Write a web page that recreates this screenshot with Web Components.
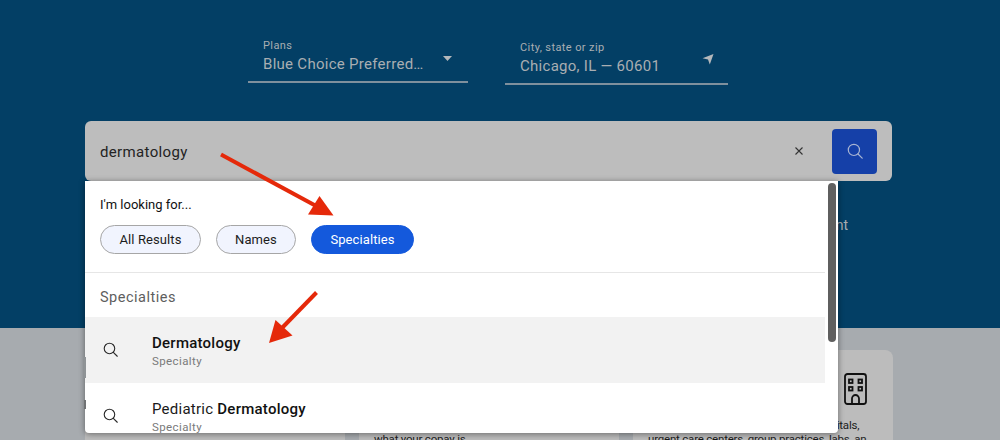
<!DOCTYPE html>
<html lang="en">
<head>
<meta charset="utf-8">
<title>Find care</title>
<style>
    html, body {
        margin: 0;
        height: 440px;
        overflow: hidden;
        background: #a7abaf;
        font-family: Roboto, "Liberation Sans", sans-serif;
    }
</style>
</head>
<body>
<care-page>
    <plan-field slot="fields" label="Plans" value="Blue Choice Preferred…" icon="caret" width="220"></plan-field>
    <plan-field slot="fields" label="City, state or zip" value="Chicago, IL — 60601" icon="nav" width="223" drop="2"></plan-field>

    <search-bar slot="search" value="dermatology">
        <suggest-panel>
            <span slot="prompt">I'm looking for...</span>
            <filter-chip slot="chips">All Results</filter-chip>
            <filter-chip slot="chips">Names</filter-chip>
            <filter-chip slot="chips" active>Specialties</filter-chip>
            <span slot="heading">Specialties</span>
            <suggest-row active><b>Dermatology</b></suggest-row>
            <suggest-row>Pediatric <b>Dermatology</b></suggest-row>
        </suggest-panel>
    </search-bar>

    <span slot="note">Search for a doctor, specialty or treatment</span>

    <info-card slot="cards"></info-card>
    <info-card slot="cards">Look up a treatment or service to see<br>what your copay is.</info-card>
    <info-card slot="cards" icon="building">Search for facilities such as local hospitals,<br>urgent care centers, group practices, labs, an</info-card>
</care-page>

<script>
const SEARCH_ICON = (size, color) => `
    <svg width="${size}" height="${size}" viewBox="0 0 16 16" fill="none" stroke="${color}" stroke-width="1.2" stroke-linecap="round">
        <circle cx="6.9" cy="6.9" r="5.6"></circle>
        <path d="M11 11l4.2 4.2"></path>
    </svg>`;

class CarePage extends HTMLElement {
    constructor() {
        super();
        this.attachShadow({ mode: "open" }).innerHTML = `
            <style>
                :host { display: block; position: relative; width: 1000px; height: 440px; overflow: hidden; }
                .hero {
                    height: 328px;
                    box-sizing: border-box;
                    padding-top: 40px;
                    background: #033f65;
                }
                .fields { display: flex; align-items: flex-start; gap: 37px; padding-left: 248px; height: 81px; }
                .search { display: block; padding: 0 108px 0 85px; }
                .note {
                    padding: 36px 152px 0 0;
                    text-align: right;
                    font-size: 14px;
                    line-height: 16px;
                    color: #a9aeb2;
                    white-space: nowrap;
                }
                .cards { display: flex; gap: 14px; padding: 22px 0 0 85px; }
                .sliver { position: absolute; left: 84px; width: 2px; }
                svg.arrows { position: absolute; left: 0; top: 0; pointer-events: none; }
            </style>
            <div class="hero">
                <div class="fields"><slot name="fields"></slot></div>
                <div class="search"><slot name="search"></slot></div>
                <div class="note"><slot name="note"></slot></div>
            </div>
            <div class="cards"><slot name="cards"></slot></div>
            <div class="sliver" style="top: 357px; height: 21px; background: #8f9396"></div>
            <div class="sliver" style="top: 400px; height: 9px; background: #707274"></div>
            <svg class="arrows" width="1000" height="440" viewBox="0 0 1000 440">
                <g fill="#e5290a" stroke="#e5290a">
                    <path d="M221 154.5L318 207" stroke-width="4" fill="none"></path>
                    <path d="M333.500 215.500L308 214.500L319.500 196z" stroke="none"></path>
                    <path d="M316.500 292.500L281 329" stroke-width="4" fill="none"></path>
                    <path d="M269 343L275.500 320L292.500 335.500z" stroke="none"></path>
                </g>
            </svg>`;
    }
}

class PlanField extends HTMLElement {
    connectedCallback() {
        if (this.shadowRoot) return;
        const icons = {
            caret: `<svg class="caret" width="9" height="5" viewBox="0 0 9 5"><path d="M0 0h9L4.500 5z" fill="#b4b8bb"></path></svg>`,
            nav: `<svg class="nav" width="12" height="11" viewBox="0 0 12 11"><path d="M11.500 0L7.800 10.500L6 5.400L.5 4.300z" fill="#b4b8bb"></path></svg>`,
        };
        const icon = this.getAttribute("icon");
        this.attachShadow({ mode: "open" }).innerHTML = `
            <style>
                :host {
                    display: block;
                    position: relative;
                    box-sizing: border-box;
                    width: ${this.getAttribute("width")}px;
                    margin-top: ${this.getAttribute("drop") || 0}px;
                    padding: 0 0 6px 15px;
                    border-bottom: 2px solid #7f909d;
                    color: #a9aeb2;
                }
                .label { font-size: 11px; line-height: 12px; letter-spacing: 0.4px; }
                .value { font-size: 15px; line-height: 22px; margin-top: 1px; letter-spacing: 0.28px; white-space: nowrap; }
                svg { position: absolute; }
                .caret { right: 16px; top: 16px; }
                .nav { right: 14px; top: 12px; }
            </style>
            <div class="label">${this.getAttribute("label")}</div>
            <div class="value">${this.getAttribute("value")}</div>
            ${icons[icon]}`;
    }
}

class SearchBar extends HTMLElement {
    connectedCallback() {
        if (this.shadowRoot) return;
        this.attachShadow({ mode: "open" }).innerHTML = `
            <style>
                :host {
                    display: flex;
                    position: relative;
                    align-items: center;
                    box-sizing: border-box;
                    width: 807px;
                    height: 60px;
                    padding: 0 15px;
                    border-radius: 6px;
                    background: #bdbdbd;
                    color: #232323;
                }
                .text { flex: 1; font-size: 15px; letter-spacing: 0.35px; margin-top: 1px; }
                .clear { display: flex; margin-right: 29px; }
                .go {
                    display: flex;
                    align-items: center;
                    justify-content: center;
                    width: 45px;
                    height: 45px;
                    border-radius: 4px;
                    background: #1540a8;
                }
            </style>
            <span class="text">${this.getAttribute("value")}</span>
            <span class="clear">
                <svg width="8" height="8" viewBox="0 0 8 8" stroke="#333" stroke-width="1.1"><path d="M.5.5l7 7M7.500.5l-7 7"></path></svg>
            </span>
            <span class="go">${SEARCH_ICON(16, "#a9b5d3")}</span>
            <slot></slot>`;
    }
}

class SuggestPanel extends HTMLElement {
    constructor() {
        super();
        this.attachShadow({ mode: "open" }).innerHTML = `
            <style>
                :host {
                    display: block;
                    position: absolute;
                    left: 0;
                    top: 60px;
                    width: 753px;
                    height: 252px;
                    overflow: hidden;
                    background: #fff;
                    border-radius: 0 0 4px 4px;
                    box-shadow: 0 1px 6px rgba(0, 0, 0, 0.45);
                    color: #111;
                }
                .filters { padding: 16px 15px 18px; border-bottom: 1px solid #e6e6e6; width: 710px; }
                .prompt { font-size: 13px; line-height: 16px; }
                .chips { display: flex; gap: 14.500px; margin-top: 12px; }
                .heading { padding: 16px 15px 11px; font-size: 14.500px; line-height: 17px; letter-spacing: 0.5px; color: #5e5e5e; }
                .rows { width: 740px; }
                .thumb {
                    position: absolute;
                    right: 2px;
                    top: 2px;
                    width: 8px;
                    height: 159px;
                    border-radius: 4px;
                    background: #5f5f5f;
                }
            </style>
            <div class="filters">
                <div class="prompt"><slot name="prompt"></slot></div>
                <div class="chips"><slot name="chips"></slot></div>
            </div>
            <div class="heading"><slot name="heading"></slot></div>
            <div class="rows"><slot></slot></div>
            <div class="thumb"></div>`;
    }
}

class FilterChip extends HTMLElement {
    constructor() {
        super();
        this.attachShadow({ mode: "open" }).innerHTML = `
            <style>
                :host {
                    display: block;
                    box-sizing: border-box;
                    height: 29px;
                    padding: 0 18.500px;
                    border: 1px solid #a6a6a6;
                    border-radius: 15px;
                    background: #f1f4fe;
                    color: #1c1c1c;
                    font-size: 13px;
                    line-height: 27px;
                    letter-spacing: 0.1px;
                }
                :host([active]) { background: #1459dc; border-color: #1459dc; color: #fff; }
            </style>
            <slot></slot>`;
    }
}

class SuggestRow extends HTMLElement {
    constructor() {
        super();
        this.attachShadow({ mode: "open" }).innerHTML = `
            <style>
                :host {
                    display: flex;
                    align-items: center;
                    box-sizing: border-box;
                    height: 66px;
                    padding-left: 18px;
                }
                :host([active]) { background: #f2f2f2; }
                .icon { display: flex; width: 49px; margin-top: -2px; }
                .title { font-size: 15px; line-height: 18px; margin-top: 1px; letter-spacing: 0.25px; color: #1a1a1a; }
                .sub { font-size: 11.500px; line-height: 14px; margin-top: 2px; letter-spacing: 0.4px; color: #7a7a7a; }
                ::slotted(b) { font-weight: 500; color: #111; }
            </style>
            <span class="icon">${SEARCH_ICON(15, "#2a2a2a")}</span>
            <div>
                <div class="title"><slot></slot></div>
                <div class="sub">Specialty</div>
            </div>`;
    }
}

class InfoCard extends HTMLElement {
    connectedCallback() {
        if (this.shadowRoot) return;
        const building = this.getAttribute("icon") === "building"
            ? `<svg width="24" height="32" viewBox="0 0 24 32" fill="none" stroke="#111" stroke-width="1.800">
                   <rect x="1" y="1" width="21" height="30" rx="2.500"></rect>
                   <rect x="5" y="6.500" width="3.500" height="3.500"></rect>
                   <rect x="14.500" y="6.500" width="3.500" height="3.500"></rect>
                   <rect x="5" y="14" width="3.500" height="3.500"></rect>
                   <rect x="14.500" y="14" width="3.500" height="3.500"></rect>
                   <path d="M8 31v-5.500a3.500 3.500 0 0 1 7 0V31"></path>
               </svg>`
            : "";
        this.attachShadow({ mode: "open" }).innerHTML = `
            <style>
                :host {
                    display: block;
                    box-sizing: border-box;
                    width: 260px;
                    height: 200px;
                    padding: 0 15px;
                    border-radius: 8px;
                    background: #bcbcbc;
                    color: #1b1b1b;
                }
                .icon { display: flex; height: 32px; padding: 23px 0 13px; margin-left: 196px; width: 24px; }
                p { margin: 0; font-size: 11.500px; line-height: 14px; letter-spacing: -0.2px; white-space: nowrap; }
            </style>
            <div class="icon">${building}</div>
            <p><slot></slot></p>`;
    }
}

customElements.define("care-page", CarePage);
customElements.define("plan-field", PlanField);
customElements.define("search-bar", SearchBar);
customElements.define("suggest-panel", SuggestPanel);
customElements.define("filter-chip", FilterChip);
customElements.define("suggest-row", SuggestRow);
customElements.define("info-card", InfoCard);
</script>
</body>
</html>
